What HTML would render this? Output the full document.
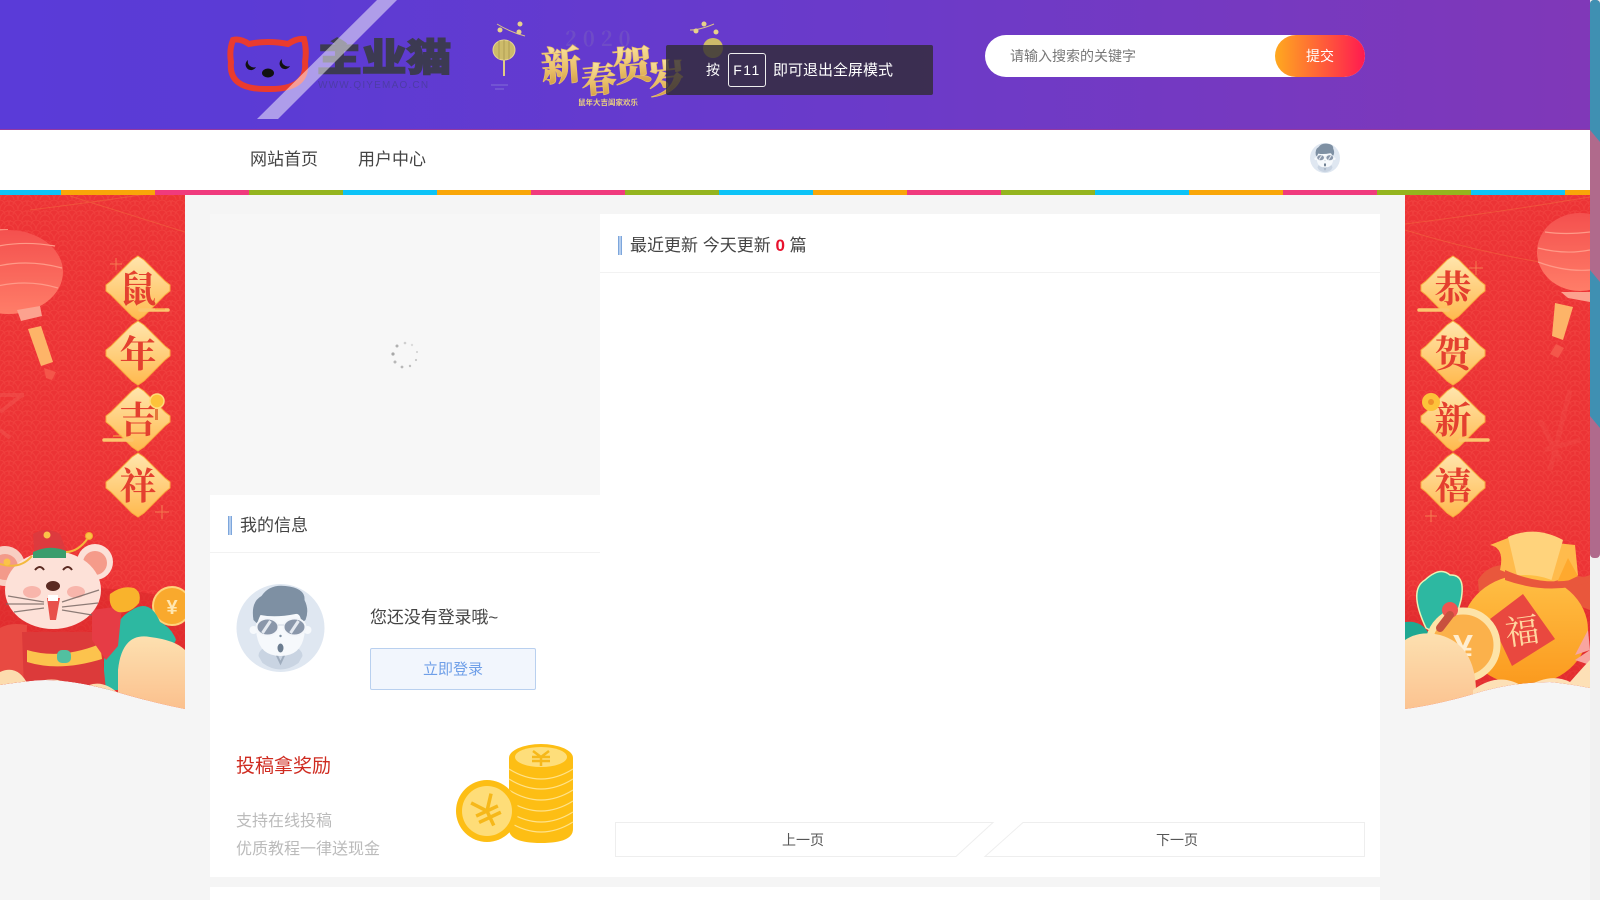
<!DOCTYPE html>
<html lang="zh-CN">
<head>
<meta charset="utf-8">
<title>企业猫</title>
<style>
*{box-sizing:border-box;margin:0;padding:0}
html,body{width:1600px;height:900px;overflow:hidden;background:#f5f5f5;font-family:"Liberation Sans","Noto Sans CJK SC",sans-serif;color:#444}
.a{position:absolute;white-space:nowrap}
#hd{left:0;top:0;width:1590px;height:130px;background:linear-gradient(90deg,#5a3bd8 0%,#5b3bd5 15%,#6b3ac9 55%,#8038b8 100%);border-bottom:1px solid #95389f}
#nav{left:0;top:130px;width:1590px;height:60px;background:#fff}
#stripe{left:0;top:190px;width:1590px;height:5px;background:repeating-linear-gradient(90deg,#0cc3f7 0 61px,#f9a608 61px 155px,#f03a7d 155px 249px,#94b41e 249px 343px,#0cc3f7 343px 376px)}
#track{left:1590px;top:0;width:10px;height:900px;background:#f1f1f1}
.card{background:#fff}
.bar{width:4px;background:#b4cdee;border:1px solid #7da6dc;border-width:0 1px}
.t17{font-size:17px;line-height:24px;color:#444}
</style>
</head>
<body>
<svg width="0" height="0" style="position:absolute">
<defs>
<pattern id="wave" width="18" height="10" patternUnits="userSpaceOnUse">
<rect width="18" height="10" fill="#ec3335"/>
<g fill="none" stroke="#f5524a" stroke-width="1" opacity=".4">
<path d="M0 10a9 9 0 0 1 18 0M4 10a5 5 0 0 1 10 0"/>
<path d="M-9 5a9 9 0 0 1 18 0M9 5a9 9 0 0 1 18 0M-5 5a5 5 0 0 1 10 0M13 5a5 5 0 0 1 10 0"/>
</g>
</pattern>
<linearGradient id="dia" x1="0" y1="0" x2="0" y2="1"><stop offset="0" stop-color="#ffe6ae"/><stop offset="1" stop-color="#ffb94e"/></linearGradient>
<linearGradient id="lan" x1="0" y1="0" x2="0" y2="1"><stop offset="0" stop-color="#f4504e"/><stop offset="1" stop-color="#ff7d68"/></linearGradient>
<linearGradient id="gold" x1="0" y1="0" x2="0" y2="1"><stop offset="0" stop-color="#fff0b8"/><stop offset=".6" stop-color="#e9bf68"/><stop offset="1" stop-color="#c98f36"/></linearGradient>
<linearGradient id="bag" x1="0" y1="0" x2="0" y2="1"><stop offset="0" stop-color="#ffbf45"/><stop offset="1" stop-color="#fb9a1e"/></linearGradient>
<linearGradient id="peach" x1="0" y1="0" x2="0" y2="1"><stop offset="0" stop-color="#fde0b0"/><stop offset="1" stop-color="#fbbf8c"/></linearGradient>
<g id="diamond">
<path d="M0-32 L6-28 L27-7 L32-3 V3 L27 7 L6 28 L0 32 L-6 28 L-27 7 L-32 3 V-3 L-27-7 L-6-28Z" fill="url(#dia)" stroke="#f9a83e" stroke-width="1"/>
</g>
<g id="avatar">
<circle cx="44" cy="44" r="44" fill="#dfe7f1"/>
<path d="M22 72q0-8 14-11h16q14 3 14 11l-4 7q-18 13-36 0z" fill="#c9d4e2"/>
<path d="M36 62l8 17 8-17" fill="none" stroke="#9eacbd" stroke-width="2"/>
<path d="M20 30h48v20q-3 22-24 22T20 50z" fill="#f6f9fc"/>
<circle cx="17" cy="46" r="4" fill="#f6f9fc"/><circle cx="71" cy="46" r="4" fill="#f6f9fc"/>
<path d="M17 36q-3-18 8-24 8-12 24-10 20 2 19 14 5 10 1 20l-4 3q-1-10-6-9-20 4-35 1-3 6-3 9z" fill="#7e90a3"/>
<ellipse cx="31" cy="43" rx="11" ry="8.500" fill="#8a97aa" stroke="#f3f6fa" stroke-width="2"/>
<ellipse cx="58" cy="43" rx="11" ry="8.500" fill="#8a97aa" stroke="#f3f6fa" stroke-width="2"/>
<path d="M26 49l8-12M54 49l8-12" stroke="#e4e9f0" stroke-width="3"/>
<rect x="41" y="40" width="7" height="2" fill="#e4e9f0"/>
<circle cx="44" cy="52" r="1.200" fill="#7e90a3"/>
<ellipse cx="44" cy="64" rx="3" ry="4.500" fill="#6c7d90"/>
</g>
</defs>
</svg>

<div class="a" id="track"></div>
<svg class="a" style="left:1590px;top:0" width="10" height="558" viewBox="0 0 10 558">
<defs><clipPath id="thumb"><rect width="10" height="558" rx="4"/></clipPath></defs>
<g clip-path="url(#thumb)">
<rect width="10" height="558" fill="#b06a8c"/>
<path d="M0 0H10V142L0 130Z M0 270L10 282V428L0 416Z" fill="#3f90b2"/>
</g>
</svg>

<!-- Side banners -->
<svg class="a" style="left:0;top:195px" width="185" height="520" viewBox="0 195 185 520">
<defs><clipPath id="cl"><path d="M0 195H185V709Q150 702 110 690 60 677 30 681 12 683 0 685Z"/></clipPath></defs>
<g clip-path="url(#cl)">
<rect y="195" width="185" height="520" fill="url(#wave)"/>
<path d="M30 210Q110 200 160 192M70 196Q130 215 185 232" stroke="#f2703f" stroke-width="1" fill="none" opacity=".5"/>
<!-- lantern -->
<path d="M0 229H8V232H0Z" fill="#fb8a7a"/>
<ellipse cx="8" cy="272" rx="55" ry="42" fill="url(#lan)"/>
<path d="M-10 248Q20 240 55 246M-10 268Q25 258 62 268M-10 288Q25 278 58 288" stroke="#ff9a88" stroke-width="1.200" fill="none"/>
<path d="M17 310L40 306 42 316 21 321Z" fill="#fca28f"/>
<path d="M28 329L41 326 53 362 41 366Z" fill="#fdb468"/>
<path d="M44 368L56 372 52 380 46 378Z" fill="#f4564a"/>
<path d="M0 395H24M0 412L22 395M0 430L10 438" stroke="#f4625a" stroke-width="4" opacity=".35"/>
<!-- diamonds -->
<use href="#diamond" x="138" y="288"/><use href="#diamond" x="138" y="353"/><use href="#diamond" x="138" y="419"/><use href="#diamond" x="138" y="485"/>
<g font-family="'Noto Serif CJK SC',serif" font-size="37" font-weight="700" fill="#e4402f" text-anchor="middle">
<text x="138" y="302">鼠</text><text x="138" y="367">年</text><text x="138" y="433">吉</text><text x="138" y="499">祥</text>
</g>
<path d="M140 310H168M104 440H132" stroke="#fbc66e" stroke-width="3.500" stroke-linecap="round"/>
<path d="M155 309H165M113 436H122" stroke="#f8a93e" stroke-width="1"/>
<circle cx="157" cy="401" r="7" fill="#fdc23a" stroke="#ffdc7a" stroke-width="1.500"/><rect x="155" y="409" width="3" height="11" fill="#e5783a"/>
<path d="M116 258v12M110 264h12M162 505v14M155 512h14" stroke="#fbb265" stroke-width="1" opacity=".55"/>
<!-- bottom deep red -->
<path d="M0 590Q90 580 185 600V700H0Z" fill="#d62628" opacity=".5"/>
<!-- teal cloud and coin -->
<circle cx="172" cy="606" r="19" fill="#f9a92d" stroke="#ffd37a" stroke-width="2"/>
<text x="172" y="614" font-size="20" font-weight="700" fill="#ffe6b0" text-anchor="middle" font-family="'Liberation Sans',sans-serif">¥</text>
<path d="M104 660Q112 620 132 610 150 598 160 622 172 628 176 640L150 690H104Z" fill="#2db8a1"/>
<!-- rat -->
<path d="M0 628Q10 622 27 625L25 685H0Z" fill="#e84a42"/>
<path d="M22 632H100L106 690H24Z" fill="#dc3a3a"/>
<path d="M27 650Q60 660 100 644L102 659Q60 672 27 662Z" fill="#fcc34d"/>
<rect x="57" y="650" width="14" height="13" rx="5" fill="#52c0a0"/>
<path d="M92 610L122 606 118 646 106 660 92 640Z" fill="#e63c45"/>
<circle cx="5" cy="566" r="20" fill="#f8cfc3"/><circle cx="5" cy="567" r="13" fill="#f39a8a"/>
<circle cx="95" cy="562" r="18" fill="#fce0d7"/><circle cx="95" cy="563" r="12" fill="#f59b8a"/>
<ellipse cx="53" cy="590" rx="48" ry="39" fill="#fde1d8"/>
<ellipse cx="32" cy="592" rx="9" ry="6" fill="#f8b5ab"/><ellipse cx="76" cy="592" rx="9" ry="6" fill="#f8b5ab"/>
<path d="M35 570q5-6 9 0M63 570q5-6 9 0" fill="none" stroke="#5a2a22" stroke-width="2"/>
<ellipse cx="53" cy="586" rx="7" ry="5" fill="#5a2a22"/>
<path d="M8 596L44 602M6 604H44M14 612L44 608M62 602L99 590M62 607L98 603M62 610L92 615" stroke="#7a6a66" stroke-width="1.300" opacity=".85"/>
<path d="M47 598L60 598 56 620H50Z" fill="#e8504a"/>
<rect x="48" y="595" width="10" height="6" fill="#fff"/>
<path d="M34 548L33 534Q46 526 60 534L66 550Q50 556 34 558Z" fill="#dd3a3e"/>
<path d="M33 552Q50 544 66 551V558H33Z" fill="#3a9d6c"/>
<circle cx="47" cy="535" r="3.500" fill="#fbc348"/>
<path d="M66 552Q78 552 88 538M0 564Q20 570 32 556" stroke="#f4b93d" stroke-width="2" fill="none"/><circle cx="89" cy="536" r="3.500" fill="#fbc348" stroke="#f4a82d"/>
<circle cx="7" cy="562" r="3.500" fill="#fbc348"/>
<path d="M110 594Q122 585 134 588 142 592 139 603 130 614 118 612 108 608 110 594Z" fill="#f9b32c"/>
<!-- clouds -->
<path d="M118 700V670Q122 632 150 637 175 640 185 650V712H118Z" fill="url(#peach)"/>
<path d="M0 672Q18 664 28 685H0Z M22 690Q50 670 78 688V700H22Z M80 690Q100 675 120 695V700H80Z" fill="#fcdcae"/>
</g>
</svg>

<svg class="a" style="left:1405px;top:195px" width="185" height="520" viewBox="1405 195 185 520">
<defs><clipPath id="cr"><path d="M1405 195H1590V688Q1570 684 1550 682 1510 682 1470 695 1435 705 1405 709Z"/></clipPath></defs>
<g clip-path="url(#cr)">
<rect x="1405" y="195" width="185" height="520" fill="url(#wave)"/>
<path d="M1405 224Q1500 212 1590 197M1405 230Q1470 250 1540 262" stroke="#f2703f" stroke-width="1" fill="none" opacity=".5"/>
<!-- lantern -->
<ellipse cx="1580" cy="252" rx="43" ry="39" fill="url(#lan)"/>
<path d="M1538 248Q1565 255 1590 250M1538 262Q1565 272 1590 270M1545 232Q1565 235 1590 232" stroke="#ff9a88" stroke-width="1.200" fill="none"/>
<path d="M1561 292H1590V302L1568 298Z" fill="#fca28f"/>
<path d="M1555 303L1573 307 1563 340 1552 336Z" fill="#fdb468"/>
<path d="M1556 344L1564 348 1558 358 1550 354Z" fill="#f4564a"/>
<path d="M1540 420Q1550 440 1560 460M1570 390L1550 470M1545 450L1580 440" stroke="#f4625a" stroke-width="5" opacity=".18"/>
<!-- diamonds -->
<use href="#diamond" x="1453" y="288"/><use href="#diamond" x="1453" y="353"/><use href="#diamond" x="1453" y="419"/><use href="#diamond" x="1453" y="485"/>
<g font-family="'Noto Serif CJK SC',serif" font-size="37" font-weight="700" fill="#e4402f" text-anchor="middle">
<text x="1453" y="302">恭</text><text x="1453" y="367">贺</text><text x="1453" y="433">新</text><text x="1453" y="499">禧</text>
</g>
<path d="M1419 310H1448M1460 440H1488" stroke="#fbc66e" stroke-width="3.500" stroke-linecap="round"/>
<circle cx="1431" cy="402" r="9" fill="#fdc23a"/><circle cx="1431" cy="402" r="3" fill="#f0902a"/>
<path d="M1476 261v14M1469 268h14M1431 510v12M1425 516h12" stroke="#fbb265" stroke-width="1" opacity=".55"/>
<path d="M1405 600H1590V700H1405Z" fill="#d62628" opacity=".4"/>
<!-- teal -->
<path d="M1426 628Q1408 590 1425 580 1440 566 1450 575 1466 574 1461 600L1450 640Z" fill="#2db8a1" stroke="#e9f3b5" stroke-width="1.500"/>
<path d="M1405 622Q1420 620 1428 632V650H1405Z" fill="#1fa892"/>
<!-- bag -->
<path d="M1478 580Q1490 560 1520 566L1590 578V610Q1540 590 1480 610Z" fill="#e9573c"/>
<path d="M1500 570Q1505 548 1490 545L1508 538 1575 545 1578 575 1540 585Z" fill="#ffbb4c"/>
<path d="M1508 537Q1535 525 1563 540L1550 585 1518 580Z" fill="#ffd37c"/>
<path d="M1555 587L1568 558 1578 576Z" fill="#ffa92e"/>
<ellipse cx="1525" cy="630" rx="63" ry="55" fill="url(#bag)"/>
<path d="M1505 570Q1550 590 1590 575V582Q1550 596 1505 580Z" fill="#e9573c"/>
<path d="M1523 594L1555 639 1512 666 1490 619Z" fill="#e9483f"/>
<text x="1522" y="643" font-family="'Noto Serif CJK SC',serif" font-size="34" fill="#ffd6a0" text-anchor="middle" transform="rotate(-8 1522 630)">福</text>
<path d="M1588 630L1590 650 1575 655ZM1575 660L1590 650V665Z" fill="#f8a5a0"/>
<!-- coin -->
<circle cx="1463" cy="645" r="34" fill="#fbb14b" stroke="#fde3a8" stroke-width="7"/>
<circle cx="1450" cy="610" r="8" fill="#ef5450"/>
<path d="M1450 615L1440 628" stroke="#c8503e" stroke-width="8" stroke-linecap="round"/>
<text x="1463" y="660" font-size="36" font-weight="700" fill="#ffeed0" text-anchor="middle" font-family="'Liberation Sans',sans-serif">¥</text>
<!-- clouds -->
<path d="M1405 720V640Q1420 630 1440 635 1475 645 1476 690V720Z" fill="url(#peach)"/>
<path d="M1473 690Q1500 670 1525 688 1550 672 1570 682 1585 665 1590 660V700H1473Z" fill="#fde0b6"/>
</g>
</svg>

<!-- Header -->
<div class="a" id="hd"></div>
<svg class="a" style="left:200px;top:0" width="720" height="130" viewBox="200 0 720 130">
<!-- logo cat -->
<path d="M233 40Q240 38 249 44 268 40 288 44 297 38 304 39 307 50 305 62 308 90 268 89 228 90 231 62 229 50 233 40Z" fill="none" stroke="#ea3b2e" stroke-width="6"/>
<path d="M248 60a5.500 5.500 0 1 0 8 7 6 6 0 0 1-8-7zM282 59a5.500 5.500 0 1 0 8 7 6 6 0 0 1-8-7z" fill="#111"/>
<ellipse cx="268" cy="73" rx="6" ry="4.500" fill="#111"/>
<text transform="translate(317 71) scale(1.120 .95)" font-family="'Noto Sans CJK SC',sans-serif" font-weight="900" font-size="40" fill="#3c3a52" stroke="#3c3a52" stroke-width="1.500">主业猫</text>
<text x="318" y="88" font-family="'Liberation Sans',sans-serif" font-size="10" letter-spacing="1.200" fill="#4d3ca6">WWW.QIYEMAO.CN</text>
<path d="M377 0H397L278 119H257Z" fill="#fff" opacity=".5"/>
<!-- banner lantern -->
<path d="M497 24Q510 32 525 36" stroke="#d9c08a" stroke-width="1" fill="none"/>
<circle cx="520" cy="24" r="2.500" fill="#e7d28a"/><circle cx="500" cy="30" r="2.500" fill="#e7d28a"/><circle cx="519" cy="32" r="2.500" fill="#e7d28a"/>
<ellipse cx="504" cy="50" rx="11" ry="10" fill="#cdbb6a" stroke="#e8d690"/>
<path d="M499 41V59M504 40V60M509 41V59" stroke="#a8974f" stroke-width=".8"/>
<path d="M504 60V76" stroke="#e0cc85" stroke-width="2"/><path d="M491 85H508M495 89H504" stroke="#8e7fd8" stroke-width=".7"/>
<g font-family="'Noto Serif CJK SC',serif" font-weight="700" fill="#7a5fc0" opacity=".5" font-size="20" letter-spacing="6"><text x="565" y="46">2020</text></g>
<g font-family="'Noto Serif CJK SC',serif" font-weight="900" fill="url(#gold)" stroke="#e9bf68" stroke-width=".7">
<text x="541" y="80" font-size="40" transform="rotate(-4 560 65)">新</text>
<text x="581" y="92" font-size="35" transform="rotate(-5 597 75)">春</text>
<text x="612" y="80" font-size="40" transform="rotate(-6 630 62)">贺</text>
<text x="648" y="92" font-size="38" transform="rotate(-6 665 78)">岁</text>
</g>
<text x="578" y="105" font-family="'Noto Sans CJK SC',sans-serif" font-size="7.500" font-weight="700" fill="#e9cf80">鼠年大吉阖家欢乐</text>
<path d="M690 30Q700 30 714 24" stroke="#d9c08a" fill="none"/><circle cx="696" cy="31" r="2.500" fill="#e7d28a"/><circle cx="704" cy="24" r="2.500" fill="#e7d28a"/><circle cx="716" cy="32" r="2.500" fill="#e7d28a"/>
<ellipse cx="713" cy="48" rx="10" ry="10" fill="#cdbb6a"/>
</svg>

<!-- Fullscreen overlay -->
<div class="a" style="left:666px;top:45px;width:267px;height:50px;background:rgba(47,44,51,.8);border-radius:2px"></div>
<div class="a" style="left:706px;top:58px;font-size:14px;line-height:24px;color:#fff">按</div>
<div class="a" style="left:728px;top:53px;width:38px;height:34px;border:1px solid #eee;border-radius:3px;color:#fff;font-size:14px;line-height:32px;text-align:center;letter-spacing:1.500px">F11</div>
<div class="a" style="left:773px;top:59px;font-size:15px;line-height:24px;color:#fff">即可退出全屏模式</div>

<!-- Search -->
<div class="a" style="left:985px;top:35px;width:380px;height:42px;background:#fff;border-radius:21px;overflow:hidden"></div>
<div class="a" style="left:1010px;top:44px;font-size:14px;line-height:24px;color:#777">请输入搜索的关键字</div>
<div class="a" style="left:1275px;top:35px;width:90px;height:42px;border-radius:21px;background:linear-gradient(90deg,#ffa91f,#ff1a50);color:#fff;font-size:14px;line-height:42px;text-align:center">提交</div>

<!-- Nav -->
<div class="a" id="nav"></div>
<div class="a" style="left:250px;top:148px;font-size:17px;line-height:24px;color:#444">网站首页</div>
<div class="a" style="left:358px;top:148px;font-size:17px;line-height:24px;color:#444">用户中心</div>
<svg class="a" style="left:1310px;top:143px" width="30" height="30" viewBox="0 0 88 88"><use href="#avatar"/></svg>
<div class="a" id="stripe"></div>

<!-- Left column -->
<div class="a" style="left:210px;top:214px;width:390px;height:281px;background:#f7f7f7"></div>
<svg class="a" style="left:391px;top:341px" width="28" height="28" viewBox="-14 -14 28 28">
<g fill="#a8a8a8">
<circle cx="0" cy="-12" r="1.300" opacity=".5"/><circle cx="7" cy="-10" r="1.200" opacity=".35"/><circle cx="12" cy="-3" r="1" opacity=".5"/><circle cx="11" cy="5" r="1.100" opacity=".6"/><circle cx="5" cy="11" r="1.200" opacity=".7"/><circle cx="-3" cy="12" r="1.400" opacity=".8"/><circle cx="-10" cy="7" r="1.500" opacity=".8"/><circle cx="-12" cy="-1" r="1.600"/><circle cx="-8" cy="-9" r="1.500" opacity=".9"/>
</g>
</svg>
<div class="a card" style="left:210px;top:495px;width:390px;height:382px"></div>
<div class="a" style="left:210px;top:552px;width:390px;height:1px;background:#f2f2f2"></div>
<div class="a bar" style="left:228px;top:516px;height:19px"></div>
<div class="a t17" style="left:240px;top:514px">我的信息</div>
<svg class="a" style="left:236px;top:584px" width="89" height="88" viewBox="0 0 88 88"><use href="#avatar"/></svg>
<div class="a" style="left:370px;top:606px;font-size:17px;line-height:24px;color:#444;letter-spacing:-.1px">您还没有登录哦~</div>
<div class="a" style="left:370px;top:648px;width:166px;height:42px;background:#f2f6fd;border:1px solid #b9d0ef;border-radius:2px;color:#6f9fe8;font-size:15px;line-height:42px;text-align:center">立即登录</div>
<div class="a" style="left:236px;top:754px;font-size:19px;line-height:26px;color:#cf2b20">投稿拿奖励</div>
<div class="a" style="left:236px;top:810px;font-size:16px;line-height:24px;color:#bbb">支持在线投稿</div>
<div class="a" style="left:236px;top:838px;font-size:16px;line-height:24px;color:#bbb">优质教程一律送现金</div>
<svg class="a" style="left:450px;top:740px" width="130" height="110" viewBox="450 740 130 110">
<path d="M509 758V829Q509 843 541 843 573 843 573 829V758Z" fill="#fdbe14"/>
<ellipse cx="541" cy="758" rx="32" ry="14" fill="#fdbe14"/>
<ellipse cx="541" cy="757" rx="26" ry="10" fill="#fede7a"/>
<g fill="none" stroke="#ffe28a" stroke-width="1.200"><path d="M509 769Q541 789 573 769M509 779Q541 799 573 779M509 790Q541 810 573 790M509 801Q541 821 573 801M509 812Q541 832 573 812M509 822Q541 842 573 822"/></g>
<path d="M533 751L541 757 549 751M532 757H550M532 761H550M541 757V766" stroke="#f6b81a" stroke-width="2.500" fill="none"/>
<circle cx="487" cy="811" r="31" fill="#fdbe14"/>
<circle cx="487" cy="811" r="25" fill="#fedd78"/>
<g transform="rotate(-25 487 811)" stroke="#f6b81a" stroke-width="3.500" fill="none"><path d="M476 797L487 811 498 797M475 811H499M475 818H499M487 811V827"/></g>
</svg>

<!-- Right column -->
<div class="a card" style="left:600px;top:214px;width:780px;height:663px"></div>
<div class="a" style="left:600px;top:272px;width:780px;height:1px;background:#f2f2f2"></div>
<div class="a bar" style="left:618px;top:236px;height:19px"></div>
<div class="a t17" style="left:630px;top:234px">最近更新 今天更新 <b style="color:#e8112d;font-weight:700">0</b> 篇</div>
<svg class="a" style="left:610px;top:820px" width="760" height="40" viewBox="610 820 760 40">
<path d="M615.500 822.500H993L956 856.500H615.500Z" fill="#fff" stroke="#eeeeee"/>
<path d="M1023 822.500H1364.500V856.500H985Z" fill="#fff" stroke="#eeeeee"/>
</svg>
<div class="a" style="left:782px;top:829px;font-size:14px;line-height:22px;color:#555">上一页</div>
<div class="a" style="left:1156px;top:829px;font-size:14px;line-height:22px;color:#555">下一页</div>

<!-- Next card -->
<div class="a card" style="left:210px;top:887px;width:1170px;height:13px"></div>
</body>
</html>
